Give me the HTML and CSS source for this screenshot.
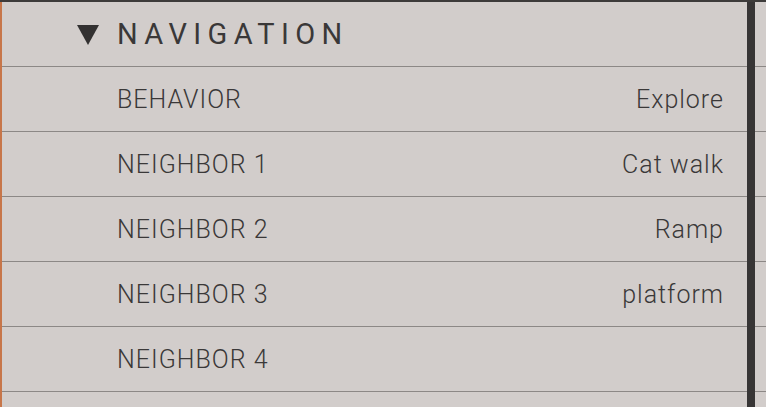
FILE: index.html
```html
<!DOCTYPE html>
<html lang="en">
<head>
    <meta charset="UTF-8">
    <meta name="viewport" content="width=device-width, initial-scale=1.0">
    <title>Navigation</title>
    <link rel="stylesheet" href="styles.css">
</head>
<body>
    <div class="panel">
        <div class="edge"></div>
        <div class="props">
            <div class="section-head">
                <svg class="caret" width="22" height="20" viewBox="0 0 22 20">
                    <polygon points="0,0 22,0 11,20" fill="#333131"/>
                </svg>
                <span class="section-title">NAVIGATION</span>
            </div>
            <div class="prop-row">
                <span class="prop-name">BEHAVIOR</span>
                <span class="prop-value">Explore</span>
            </div>
            <div class="prop-row">
                <span class="prop-name">NEIGHBOR 1</span>
                <span class="prop-value">Cat walk</span>
            </div>
            <div class="prop-row">
                <span class="prop-name">NEIGHBOR 2</span>
                <span class="prop-value">Ramp</span>
            </div>
            <div class="prop-row">
                <span class="prop-name">NEIGHBOR 3</span>
                <span class="prop-value">platform</span>
            </div>
            <div class="prop-row">
                <span class="prop-name">NEIGHBOR 4</span>
                <span class="prop-value"></span>
            </div>
            <div class="prop-row last"></div>
        </div>
        <div class="scrollbar"></div>
        <div class="stub"></div>
    </div>
</body>
</html>
```

FILE: styles.css
```css
html, body { margin: 0; height: 100%; overflow: hidden; }
body {
    font-family: Roboto, "Liberation Sans", sans-serif;
    background: #d2cdcb;
    color: #3a3838;
}
.panel {
    display: flex;
    height: 407px;
    border-top: 2px solid #3d3b3a;
    box-sizing: border-box;
}
.edge { width: 2px; background: #c7764a; }
.props { width: 745px; display: flex; flex-direction: column; }
.scrollbar { width: 8px; background: #373535; }
.stub {
    flex: 1;
    background: repeating-linear-gradient(to bottom, transparent 0, transparent 64px, #8c8886 64px, #8c8886 65px);
}
.section-head {
    height: 64px;
    flex: none;
    border-bottom: 1px solid #8c8886;
    display: flex;
    align-items: center;
    padding-left: 75px;
}
.caret { margin-right: 18px; margin-top: 2px; }
.section-title {
    font-size: 29px;
    letter-spacing: 6.4px;
    font-weight: 400;
    color: #3a3838;
}
.prop-row {
    height: 64px;
    flex: none;
    border-bottom: 1px solid #8c8886;
    display: flex;
    align-items: center;
    justify-content: space-between;
    padding: 0 24px 0 115px;
}
.prop-row.last { flex: 1; height: auto; border-bottom: none; }
.prop-name, .prop-value { font-size: 25px; font-weight: 300; letter-spacing: 1px; }
.prop-value { margin-right: -1px; }
```
